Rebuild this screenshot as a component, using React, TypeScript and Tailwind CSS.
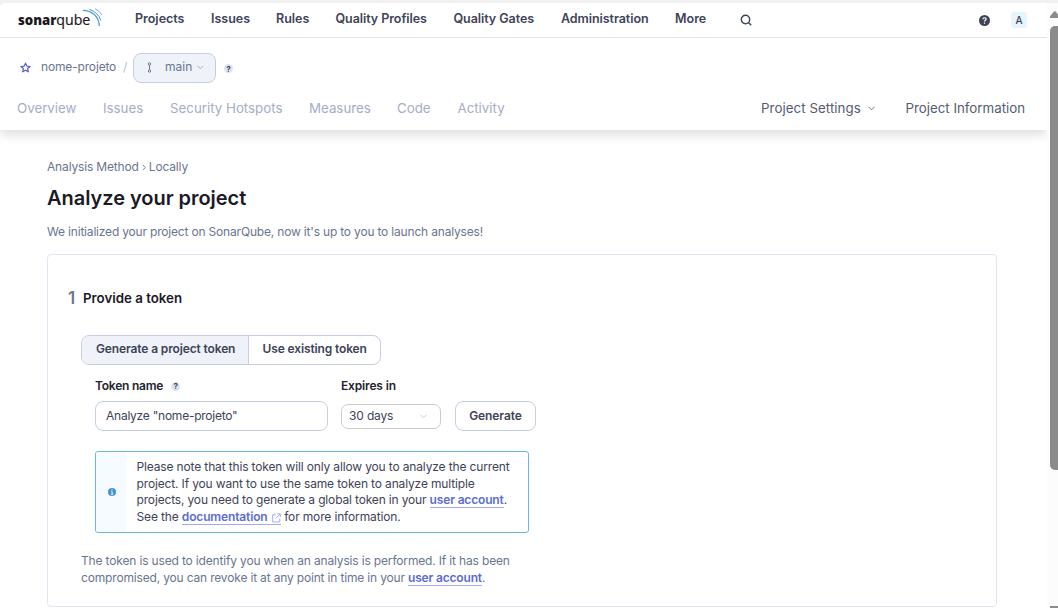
import React from "react";

const Help = ({ className = "" }: { className?: string }) => (
  <span className={"flex h-[9px] w-[9px] shrink-0 items-center justify-center rounded-full bg-[#dde3f3] text-[8px] font-bold leading-none tracking-normal text-[#3e4357] " + className}>?</span>
);

const Chevron = ({ className = "" }: { className?: string }) => (
  <svg className={"shrink-0 " + className} width="7" height="5" viewBox="0 0 7 5" fill="none" stroke="currentColor" strokeWidth="1">
    <path d="M0.5 0.8 L3.5 3.8 L6.5 0.8" />
  </svg>
);

const Logo = () => (
  <svg width="90" height="24" viewBox="0 0.6 90 24">
    <text x="1" y="18" textLength="38.5" lengthAdjust="spacingAndGlyphs" fontFamily="Open Sans" fontWeight="800" fontSize="14" fill="#1b171b">sonar</text>
    <text x="39.3" y="18" textLength="34" lengthAdjust="spacingAndGlyphs" fontFamily="Open Sans" fontWeight="400" fontSize="14.5" fill="#1b171b" stroke="#1b171b" strokeWidth="0.2">qube</text>
    <g fill="none" stroke="#4c9bd6">
      <path d="M66 2.9 C75 3.1 82 9 82.3 18.7" strokeWidth="1.3" />
      <path d="M72.3 1.9 C78 3.7 82 7.7 83.9 13.2" strokeWidth="1" />
      <path d="M78 1.4 C81 2.7 83.5 4.9 84.9 7.8" strokeWidth="0.8" />
    </g>
  </svg>
);

const link = "border-b border-[#a5aaf0] font-semibold text-[#5d6cd0]";

export default function App() {
  return (
    <div className="flex h-[608px] w-[1058px] overflow-hidden bg-[#f1f1f1] pt-[3px] font-['Inter',sans-serif] text-[12px] leading-[16.67px] tracking-[-0.16px] text-[#3e4357]">
      <div className="flex h-full w-[1047px] shrink-0 flex-col overflow-hidden rounded-tl-[5px] bg-white">
        <header className="z-10 h-[127px] w-full shrink-0 bg-white shadow-[0_4px_10px_rgba(29,33,47,0.16)]">
          <div className="flex h-[35px] items-center border-b border-[#e3e4e8] pl-[17px] text-[12.5px] font-semibold tracking-normal">
            <div className="w-[118px]"><Logo /></div>
            <nav className="flex pb-[1px]">
              <a className="w-[76px]">Projects</a>
              <a className="w-[65px]">Issues</a>
              <a className="w-[59.5px]">Rules</a>
              <a className="w-[118px] tracking-[-0.06px]">Quality Profiles</a>
              <a className="w-[107.5px] tracking-[-0.06px]">Quality Gates</a>
              <a className="w-[114px] tracking-[-0.06px]">Administration</a>
              <a className="w-[65px]">More</a>
            </nav>
            <svg width="12" height="12" viewBox="0 0 12 12" fill="none" stroke="#3e4357" strokeWidth="1.4"><circle cx="5.5" cy="5.5" r="4.2" /><path d="M8.5 8.5 L11.2 11.2" /></svg>
            <svg className="ml-[227px]" width="11" height="11" viewBox="0 0 16 16"><circle cx="8" cy="8" r="8" fill="#3e4357" /><path d="M5.7 6.2 C5.8 3.2 10.4 3.4 10.3 6 C10.2 7.7 8 7.6 8 9.6 M8 11 V12.8" fill="none" stroke="white" strokeWidth="1.8" /></svg>
            <span className="ml-[21px] flex h-4 w-4 items-center justify-center rounded-[3px] bg-[#e6f4fb] text-[10px] font-medium">A</span>
          </div>
          <div className="flex h-[60px] items-center pl-[20px] text-[#6a7590]">
            <svg className="-mt-[2px]" width="11" height="11" viewBox="0 0 24 24" fill="none" stroke="#5357c8" strokeWidth="2.5" strokeLinejoin="round"><path d="M12 2.5 L15 9 L22 9.7 L16.7 14.3 L18.2 21.5 L12 17.8 L5.8 21.5 L7.3 14.3 L2 9.7 L9 9 Z" /></svg>
            <span className="ml-[10px] w-[82px] pb-[2px]">nome-projeto</span>
            <span className="w-[10px] pb-[2px] text-[#b7bdcb]">/</span>
            <button className="flex h-[30px] w-[83px] items-center rounded-lg border border-[#c5cde1] bg-[#eff2f9] pb-[2px] pl-[12px]">
              <svg width="7" height="11" viewBox="0 0 7 11" fill="none" stroke="#6a7590"><circle cx="3.5" cy="2" r="1.2" /><circle cx="3.5" cy="9" r="1.2" /><path d="M3.5 3 V8" /></svg>
              <span className="ml-[12px] w-[32px] text-left tracking-normal">main</span>
              <Chevron className="mt-px text-[#a6adc0]" />
            </button>
            <Help className="ml-[8px] mt-px" />
          </div>
          <nav className="flex items-center pl-[17px] pt-[2px] text-[13.3px] leading-[17px] tracking-normal text-[#a6adc8]">
            <a className="w-[86px]">Overview</a>
            <a className="w-[67px]">Issues</a>
            <a className="w-[139px]">Security Hotspots</a>
            <a className="w-[88px]">Measures</a>
            <a className="w-[60.5px]">Code</a>
            <a className="w-[303.5px]">Activity</a>
            <a className="w-[107px] whitespace-nowrap tracking-[0.06px] text-[#565b70]">Project Settings</a>
            <Chevron className="-mt-px text-[#6a7590]" />
            <a className="ml-[30.5px] whitespace-nowrap text-[#565b70]">Project Information</a>
          </nav>
        </header>
        <main className="pl-[47px] pt-[29px] text-[#6a7590]">
          <div className="flex items-center"><span>Analysis Method</span><svg className="mx-[3px]" width="4" height="7" viewBox="0 0 4 7" fill="none" stroke="#6a7590" strokeWidth="0.9"><path d="M0.7 0.8 L3.3 3.5 L0.7 6.2" /></svg><span>Locally</span></div>
          <h1 className="mt-[9px] text-[20px] font-semibold leading-[27px] tracking-[-0.04px] text-[#1b1a26]">Analyze your project</h1>
          <p className="mt-[12px] tracking-[-0.185px]">We initialized your project on SonarQube, now it's up to you to launch analyses!</p>
          <section className="mt-[14px] h-[353px] w-[950px] rounded-[4px] border border-[#e1e6f3] pl-[20px] pt-[33px]">
            <div className="flex h-[20px] items-center">
              <span className="w-[15px] text-[17px] font-semibold">1</span>
              <h2 className="text-[13.3px] font-semibold tracking-normal text-[#1b1a26]">Provide a token</h2>
            </div>
            <div className="ml-[13px] mt-[27px] flex h-[30px] w-[300px] overflow-hidden rounded-lg border border-[#c5cde1] font-semibold leading-[26px] tracking-[-0.13px] text-[#3e4357]">
              <span className="w-[167px] border-r border-[#c5cde1] bg-[#eff2f9] pl-[14px]">Generate a project token</span>
              <span className="pl-[13.5px]">Use existing token</span>
            </div>
            <div className="ml-[27px] mt-[13px] flex text-[#3e4357]">
              <div className="w-[246px]">
                <label className="flex h-[17px] items-center pb-px font-semibold tracking-[-0.22px] text-[#24232f]"><span>Token name</span><Help className="ml-[8px]" /></label>
                <div className="mt-[6px] h-[30px] w-[233px] rounded-lg border border-[#c5cde1] pl-[10px] leading-[28px] tracking-[-0.24px]">Analyze "nome-projeto"</div>
              </div>
              <div className="w-[114px]">
                <label className="block h-[17px] font-semibold text-[#24232f]">Expires in</label>
                <div className="mt-[9px] flex h-[25px] w-[100px] items-center rounded-[7px] border border-[#cccccc] pl-[7px]"><span className="w-[71px] pb-px">30 days</span><Chevron className="text-[#cccccc]" /></div>
              </div>
              <button className="mt-[23px] h-[30px] w-[81px] rounded-lg border border-[#c5cde1] font-semibold tracking-[-0.08px]">Generate</button>
            </div>
            <div className="ml-[27px] mt-[20px] flex h-[82px] w-[434px] overflow-hidden rounded-[3px] border border-[#6cb5e0] text-[#3e4357]">
              <div className="flex w-[30px] shrink-0 items-center justify-center bg-[#f5fbff] pl-px">
                <svg width="8" height="8" viewBox="0 0 8 8"><circle cx="4" cy="4" r="4" fill="#4394d0" /><path d="M4 1.3V2.4M3.2 3.6H4.2V6.2M3 6.2H5.2" stroke="white" strokeWidth="0.9" fill="none" /></svg>
              </div>
              <div className="whitespace-nowrap pl-[10.5px] pt-[6.8px] tracking-[-0.145px]">
                <div>Please note that this token will only allow you to analyze the current</div>
                <div>project. If you want to use the same token to analyze multiple</div>
                <div className="tracking-[-0.16px]">projects, you need to generate a global token in your <a className={link}>user account</a>.</div>
                <div>See the <a className={link}>documentation <svg className="ml-[1.5px] inline-block align-[-2px]" width="9" height="10" viewBox="0 0 9 10" fill="none" stroke="#a5aaf0"><path d="M4 1.8H0.7V9H7.8V5.7M5.2 0.8H8.3V4M8.2 0.9L3.7 5.5" /></svg></a> for more information.</div>
              </div>
            </div>
            <div className="ml-[13px] mt-[20px]">
              <div>The token is used to identify you when an analysis is performed. If it has been</div>
              <div className="tracking-[-0.17px]">compromised, you can revoke it at any point in time in your <a className={link}>user account</a>.</div>
            </div>
          </section>
        </main>
      </div>
      <div className="flex w-[11px] flex-col items-end bg-[#fcfcfc]">
        <svg className="mt-[8px]" width="8" height="7" viewBox="0 0 8 7"><path d="M0 7V5.3L4 0.5Q4.8 -0.2 5.6 0.5L8 3.5V7Z" fill="#8b8b8b" /></svg>
        <div className="mt-[8px] h-[444px] w-[8px] rounded-l-[5px] bg-[#8b8b8b]" />
        <div className="mt-auto h-[2px] w-[8px] bg-[#8b8b8b]" />
      </div>
    </div>
  );
}
